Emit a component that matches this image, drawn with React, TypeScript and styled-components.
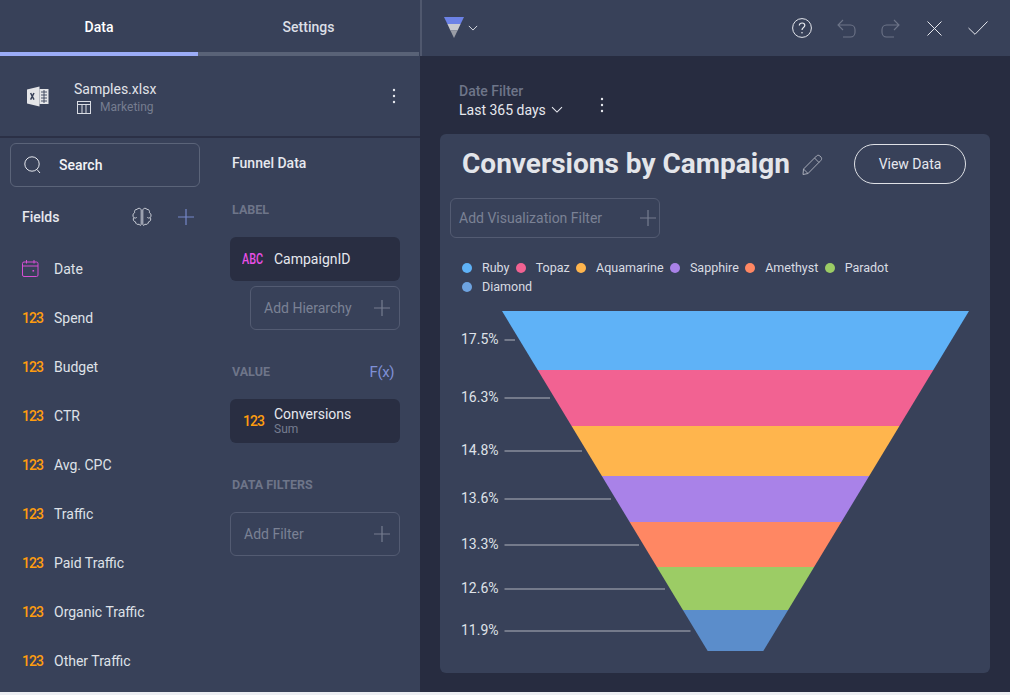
import styled, { createGlobalStyle } from "styled-components";

const GlobalStyle = createGlobalStyle`
  html, body {
    margin: 0;
    padding: 0;
    background: #eceef2;
  }
  * {
    box-sizing: border-box;
  }
`;

const fields = [
  "Spend",
  "Budget",
  "CTR",
  "Avg. CPC",
  "Traffic",
  "Paid Traffic",
  "Organic Traffic",
  "Other Traffic",
];

const legendItems = [
  { name: "Ruby", color: "#5fb2f7" },
  { name: "Topaz", color: "#f26292" },
  { name: "Aquamarine", color: "#ffb54d" },
  { name: "Sapphire", color: "#a982e8" },
  { name: "Amethyst", color: "#ff8763" },
  { name: "Paradot", color: "#9ccc65" },
  { name: "Diamond", color: "#6ea3e0" },
];

// funnel bands, coordinates relative to the chart svg
const funnelBands = [
  { top: 6, bottom: 65, color: "#5fb2f7", label: "17.5%", y: 35, lineEnd: 75 },
  { top: 65, bottom: 121, color: "#f26292", label: "16.3%", y: 93, lineEnd: 110 },
  { top: 121, bottom: 171, color: "#ffb54d", label: "14.8%", y: 146, lineEnd: 142 },
  { top: 171, bottom: 217, color: "#a982e8", label: "13.6%", y: 194, lineEnd: 171 },
  { top: 217, bottom: 262, color: "#ff8763", label: "13.3%", y: 240, lineEnd: 199 },
  { top: 262, bottom: 305, color: "#9ccc65", label: "12.6%", y: 284, lineEnd: 225 },
  { top: 305, bottom: 346, color: "#5b8dcb", label: "11.9%", y: 326, lineEnd: 250.5 },
];

const funnelEdge = (y: number) => 62 + (y - 6) * 0.605;
const bandPoints = (top: number, bottom: number) =>
  `${funnelEdge(top)},${top} ${591 - funnelEdge(top)},${top} ${591 - funnelEdge(bottom)},${bottom} ${funnelEdge(bottom)},${bottom}`;

function PlusIcon({ color = "#767d90" }: { color?: string }) {
  return (
    <svg width="18" height="18" viewBox="0 0 18 18" fill="none">
      <path d="M9 1v16M1 9h16" stroke={color} strokeWidth="1.2" />
    </svg>
  );
}

function Kebab() {
  return (
    <svg width="4" height="16" viewBox="0 0 4 16" fill="#e6e8ee">
      <circle cx="2" cy="2" r="1.2" />
      <circle cx="2" cy="8" r="1.2" />
      <circle cx="2" cy="14" r="1.2" />
    </svg>
  );
}

function Chevron({ width = 12 }: { width?: number }) {
  return (
    <svg width={width} height={width * 0.6} viewBox="0 0 12 7" fill="none">
      <path d="M1 1l5 5 5-5" stroke="#e6e8ee" strokeWidth="1.1" />
    </svg>
  );
}

function ExcelIcon() {
  return (
    <svg width="22" height="21" viewBox="0 0 22 21">
      <path d="M0 3.5L12.5 0.5V20.5L0 17.5Z" fill="#e4e5e8" />
      <rect x="12.5" y="3" width="9" height="15" fill="#e4e5e8" />
      <path d="M14 6h6M14 9h6M14 12h6M14 15h6M17 4v13" stroke="#384159" strokeWidth="0.9" />
      <path d="M3.6 7l3.4 6.6M7 7l-3.4 6.6" stroke="#384159" strokeWidth="1.5" />
    </svg>
  );
}

function TableIcon() {
  return (
    <svg width="14" height="13" viewBox="0 0 14 13" fill="none" stroke="#d9dce3" strokeWidth="1">
      <rect x="0.5" y="0.5" width="13" height="12" />
      <path d="M0.5 3.5h13M5 3.5v9M9 3.5v9" />
    </svg>
  );
}

function SearchIcon() {
  return (
    <svg width="17" height="18" viewBox="0 0 17 18" fill="none" stroke="#e6e8ee" strokeWidth="1">
      <circle cx="8" cy="8" r="7.2" />
      <path d="M13 13.5l3 3.5" />
    </svg>
  );
}

function BrainIcon() {
  return (
    <svg width="20" height="20" viewBox="0 0 20 20" fill="none" stroke="#d7dae2" strokeWidth="0.9">
      <path d="M9.2 2.8C8.6 1 6 .7 5 2.4 3.2 2.2 2 3.9 2.7 5.6 .8 6.4.3 9.2 1.8 10.5.6 12.2 1.5 14.6 3.5 14.9c0 1.9 2 3.1 3.6 2.3.6 1.6 2.1 1.5 2.1 0V2.8z" />
      <path d="M10.8 2.8c.6-1.8 3.2-2.1 4.2-.4 1.8-.2 3 1.5 2.3 3.2 1.9.8 2.4 3.6.9 4.9 1.2 1.7.3 4.1-1.7 4.4 0 1.9-2 3.1-3.6 2.3-.6 1.6-2.1 1.5-2.1 0V2.8z" />
      <path d="M1.8 10.5c1 .9 2.4.7 3-.3M18.2 10.5c-1 .9-2.4.7-3-.3" />
    </svg>
  );
}

function CalendarIcon() {
  return (
    <svg width="17" height="17" viewBox="0 0 17 17" fill="none" stroke="#d64fd4" strokeWidth="1">
      <rect x="0.5" y="2" width="15.5" height="14.5" rx="1.5" />
      <path d="M0.5 6h15.5M4.5 0v3.5M12 0v3.5" />
      <rect x="10.5" y="10" width="1.6" height="1.6" fill="#d64fd4" stroke="none" />
    </svg>
  );
}

function FunnelLogo() {
  return (
    <svg width="20" height="22" viewBox="0 0 20 22">
      <path d="M0 0H20L16.6 7H3.4Z" fill="#6c82e6" />
      <path d="M3.4 7H16.6L13.6 13.5H6.4Z" fill="#c8cad0" />
      <path d="M6.4 13.5H13.6L10 21Z" fill="#9a9da6" />
    </svg>
  );
}

function HelpIcon() {
  return (
    <svg width="20" height="20" viewBox="0 0 20 20" fill="none" stroke="#e6e8ee" strokeWidth="1">
      <circle cx="10" cy="10" r="9.4" />
      <path d="M7.3 7.6c0-1.6 1.2-2.6 2.8-2.6 1.6 0 2.7 1 2.7 2.4 0 2.2-2.8 2.2-2.8 4.6" strokeWidth="1.2" />
      <circle cx="10" cy="14.8" r="0.8" fill="#e6e8ee" stroke="none" />
    </svg>
  );
}

function UndoIcon({ flip }: { flip?: boolean }) {
  return (
    <svg
      width="19"
      height="19"
      viewBox="0 0 19 19"
      fill="none"
      stroke="#6d7488"
      strokeWidth="1.1"
      style={flip ? { transform: "scaleX(-1)" } : undefined}
    >
      <path d="M6 1L1 6l5 5M1 6h12.5c2.5 0 4.5 2 4.5 4.8v2.4c0 2.8-2 4.8-4.5 4.8H6" />
    </svg>
  );
}

function CloseIcon() {
  return (
    <svg width="15" height="15" viewBox="0 0 15 15" fill="none" stroke="#e6e8ee" strokeWidth="1">
      <path d="M.5.5l14 14M14.5.5l-14 14" />
    </svg>
  );
}

function CheckIcon() {
  return (
    <svg width="20" height="14" viewBox="0 0 20 14" fill="none" stroke="#e6e8ee" strokeWidth="1">
      <path d="M.5 7l6.5 6.3L19.5.5" />
    </svg>
  );
}

function PencilIcon() {
  return (
    <svg width="21" height="21" viewBox="0 0 21 21" fill="none" stroke="#a8acb8" strokeWidth="1">
      <path d="M1.5 15L14.5 2c1-1 2.4-1 3.4 0l1 1c1 1 1 2.4 0 3.4L6 19.5 1 20.5 1.5 15zM12.5 4l4.5 4.5M1.5 15L6 19.5" />
    </svg>
  );
}

export default function App() {
  return (
    <Page>
      <GlobalStyle />
      <Sidebar>
        <Tabs>
          <Tab $active>Data</Tab>
          <Tab>Settings</Tab>
        </Tabs>

        <SourceRow>
          <SourceIcon>
            <ExcelIcon />
          </SourceIcon>
          <SourceInfo>
            <SourceName>Samples.xlsx</SourceName>
            <SourceTable>
              <TableIcon />
              Marketing
            </SourceTable>
          </SourceInfo>
          <Kebab />
        </SourceRow>

        <SidebarBody>
          <FieldsColumn>
            <SearchBox>
              <SearchIcon />
              Search
            </SearchBox>
            <FieldsHeader>
              <FieldsTitle>Fields</FieldsTitle>
              <BrainIcon />
              <PlusIcon color="#7587c9" />
            </FieldsHeader>
            <FieldRow>
              <FieldType>
                <CalendarIcon />
              </FieldType>
              Date
            </FieldRow>
            {fields.map((field) => (
              <FieldRow key={field}>
                <FieldType>123</FieldType>
                {field}
              </FieldRow>
            ))}
          </FieldsColumn>

          <DataColumn>
            <DataTitle>Funnel Data</DataTitle>
            <SectionLabel $top={28}>LABEL</SectionLabel>
            <Chip>
              <ChipType $color="#e84fe6" $condensed>
                ABC
              </ChipType>
              <ChipName>CampaignID</ChipName>
            </Chip>
            <AddBox $indent $top={5}>
              Add Hierarchy
              <PlusIcon />
            </AddBox>
            <SectionLabel $top={33}>
              VALUE
              <FxLabel>F(x)</FxLabel>
            </SectionLabel>
            <Chip>
              <ChipType $color="#ff9d0f">123</ChipType>
              <div>
                <ChipName>Conversions</ChipName>
                <ChipSub>Sum</ChipSub>
              </div>
            </Chip>
            <SectionLabel $top={33}>DATA FILTERS</SectionLabel>
            <AddBox $top={18}>
              Add Filter
              <PlusIcon />
            </AddBox>
          </DataColumn>
        </SidebarBody>
      </Sidebar>

      <Main>
        <Toolbar>
          <ChartPicker>
            <FunnelLogo />
            <Chevron width={10} />
          </ChartPicker>
          <ToolbarActions>
            <ToolSlot>
              <HelpIcon />
            </ToolSlot>
            <ToolSlot>
              <UndoIcon />
            </ToolSlot>
            <ToolSlot>
              <UndoIcon flip />
            </ToolSlot>
            <ToolSlot>
              <CloseIcon />
            </ToolSlot>
            <ToolSlot>
              <CheckIcon />
            </ToolSlot>
          </ToolbarActions>
        </Toolbar>

        <FilterBar>
          <div>
            <FilterLabel>Date Filter</FilterLabel>
            <FilterValue>
              Last 365 days
              <Chevron />
            </FilterValue>
          </div>
          <FilterMenu>
            <Kebab />
          </FilterMenu>
        </FilterBar>

        <Card>
          <CardHeader>
            <CardTitle>Conversions by Campaign</CardTitle>
            <PencilIcon />
            <ViewDataButton>View Data</ViewDataButton>
          </CardHeader>
          <VizFilter>
            Add Visualization Filter
            <PlusIcon />
          </VizFilter>
          <Legend>
            {legendItems.map((item) => (
              <LegendItem key={item.name}>
                <LegendDot $color={item.color} />
                {item.name}
              </LegendItem>
            ))}
          </Legend>
          <ChartSvg width="550" height="350" viewBox="0 0 550 350">
            {funnelBands.map((band) => (
              <polygon
                key={band.label}
                points={bandPoints(band.top, band.bottom)}
                fill={band.color}
              />
            ))}
            {funnelBands.map((band) => (
              <g key={band.label + "-label"}>
                <line
                  x1="64.5"
                  x2={band.lineEnd}
                  y1={band.y}
                  y2={band.y}
                  stroke="#b0b4be"
                  strokeWidth="1"
                />
                <ChartLabel x="21" y={band.y + 3.8}>
                  {band.label}
                </ChartLabel>
              </g>
            ))}
          </ChartSvg>
        </Card>
      </Main>
    </Page>
  );
}

const Page = styled.div`
  display: flex;
  width: 1010px;
  height: 692px;
  overflow: hidden;
  font-family: Roboto, "Liberation Sans", sans-serif;
  font-size: 14px;
  color: #e6e8ee;
`;

const Sidebar = styled.aside`
  width: 420px;
  flex: none;
  display: flex;
  flex-direction: column;
  background: #384159;
`;

const Tabs = styled.div`
  display: grid;
  grid-template-columns: 198px 221px;
  height: 56px;
  flex: none;
`;

const Tab = styled.div<{ $active?: boolean }>`
  display: flex;
  align-items: center;
  justify-content: center;
  padding-top: 2px;
  font-weight: 500;
  font-size: 14px;
  color: ${(props) => (props.$active ? "#ffffff" : "#dcdfe6")};
  border-bottom: 4px solid ${(props) => (props.$active ? "#9bacf7" : "#596277")};
`;

const SourceRow = styled.div`
  display: flex;
  align-items: center;
  height: 82px;
  flex: none;
  padding: 0 24px 0 27px;
  border-bottom: 2px solid #2b3046;
`;

const SourceIcon = styled.div`
  display: flex;
  width: 47px;
`;

const SourceInfo = styled.div`
  flex: 1;
  margin-top: 4px;
`;

const SourceName = styled.div`
  font-size: 14px;
  line-height: 18px;
  color: #e2e4ea;
`;

const SourceTable = styled.div`
  display: flex;
  align-items: center;
  gap: 9px;
  padding-left: 3px;
  font-size: 12px;
  line-height: 18px;
  color: #767d90;
`;

const SidebarBody = styled.div`
  display: flex;
  flex: 1;
  min-height: 0;
`;

const FieldsColumn = styled.div`
  width: 210px;
  flex: none;
  padding: 5px 5px 0 10px;
`;

const SearchBox = styled.div`
  display: flex;
  align-items: center;
  gap: 18px;
  width: 190px;
  height: 44px;
  padding-left: 13px;
  border: 1px solid #5b6479;
  border-radius: 6px;
  font-weight: 500;
  color: #f2f3f6;
`;

const FieldsHeader = styled.div`
  display: flex;
  align-items: center;
  width: 185px;
  height: 30px;
  margin: 15px 0 12px;
  padding-left: 12px;
  gap: 25px;
`;

const FieldsTitle = styled.div`
  flex: 1;
  font-weight: 500;
  color: #e6e8ee;
`;

const FieldRow = styled.div`
  display: flex;
  align-items: center;
  height: 49px;
  padding-left: 12px;
  color: #dfe1e8;
`;

const FieldType = styled.div`
  width: 32px;
  flex: none;
  display: flex;
  font-weight: 500;
  font-size: 14px;
  letter-spacing: -0.9px;
  color: #ff9d0f;
`;

const DataColumn = styled.div`
  width: 170px;
  margin-left: 20px;
  padding-top: 15px;
`;

const DataTitle = styled.div`
  height: 20px;
  padding-left: 2px;
  line-height: 20px;
  font-weight: 500;
  color: #e6e8ee;
`;

const SectionLabel = styled.div<{ $top: number }>`
  display: flex;
  align-items: center;
  justify-content: space-between;
  height: 18px;
  margin-top: ${(props) => props.$top}px;
  margin-bottom: 18px;
  padding: 0 6px 1px 2px;
  font-size: 12.5px;
  font-weight: 700;
  color: #6e7589;
`;

const FxLabel = styled.span`
  font-size: 15px;
  font-weight: 400;
  letter-spacing: -0.4px;
  color: #7f90d6;
`;

const Chip = styled.div`
  display: flex;
  align-items: center;
  gap: 12px;
  height: 44px;
  padding-left: 13px;
  border-radius: 6px;
  background: #292e42;
`;

const ChipType = styled.div<{ $color: string; $condensed?: boolean }>`
  width: 19px;
  font-weight: 500;
  font-size: 14px;
  letter-spacing: -0.9px;
  white-space: nowrap;
  color: ${(props) => props.$color};
  ${(props) =>
    props.$condensed &&
    `
    margin-left: -1px;
    width: 20px;
    font-size: 15px;
    letter-spacing: 0;
    transform: scaleX(0.72);
    transform-origin: left center;
  `}
`;

const ChipName = styled.div`
  line-height: 15px;
  color: #e6e8ee;
`;

const ChipSub = styled.div`
  font-size: 12px;
  line-height: 14px;
  color: #767d90;
`;

const AddBox = styled.div<{ $indent?: boolean; $top: number }>`
  display: flex;
  align-items: center;
  justify-content: space-between;
  height: 44px;
  margin-top: ${(props) => props.$top}px;
  margin-left: ${(props) => (props.$indent ? "20px" : "0")};
  padding: 0 8px 0 13px;
  border: 1px solid #535b72;
  border-radius: 6px;
  color: #7b8295;
`;

const Main = styled.main`
  flex: 1;
  min-width: 0;
  display: flex;
  flex-direction: column;
  background: #272c40;
`;

const Toolbar = styled.div`
  display: flex;
  align-items: center;
  justify-content: space-between;
  height: 56px;
  flex: none;
  padding: 0 22px 0 22px;
  background: #384159;
  border-left: 2px solid #50586e;
`;

const ChartPicker = styled.div`
  display: flex;
  align-items: center;
  gap: 4px;
`;

const ToolbarActions = styled.div`
  display: flex;
  align-items: center;
  gap: 24px;
`;

const ToolSlot = styled.div`
  display: flex;
  align-items: center;
  justify-content: center;
  width: 20px;
  height: 20px;
`;

const FilterBar = styled.div`
  display: flex;
  align-items: center;
  height: 78px;
  flex: none;
  padding: 11px 0 0 39px;
`;

const FilterLabel = styled.div`
  font-size: 14px;
  line-height: 18px;
  font-weight: 500;
  color: #6e7589;
`;

const FilterValue = styled.div`
  display: flex;
  align-items: center;
  gap: 5px;
  line-height: 20px;
  color: #e6e8ee;
`;

const FilterMenu = styled.div`
  display: flex;
  margin: 9px 0 0 37px;
`;

const Card = styled.section`
  width: 550px;
  height: 539px;
  margin-left: 20px;
  border-radius: 6px;
  background: #384159;
`;

const CardHeader = styled.div`
  display: flex;
  align-items: center;
  padding: 10px 24px 0 22px;
`;

const CardTitle = styled.h1`
  margin: 0 12px 0 0;
  font-size: 28px;
  line-height: 40px;
  font-weight: 700;
  color: #e3e5ea;
`;

const ViewDataButton = styled.button`
  width: 112px;
  height: 40px;
  margin-left: auto;
  border: 1px solid #dfe1e6;
  border-radius: 20px;
  background: transparent;
  font-family: inherit;
  font-size: 14px;
  color: #e6e8ee;
`;

const VizFilter = styled.div`
  display: flex;
  align-items: center;
  justify-content: space-between;
  width: 210px;
  height: 40px;
  margin: 14px 0 0 10px;
  padding: 0 2px 0 8px;
  border: 1px solid #535b72;
  border-radius: 6px;
  color: #7b8295;
`;

const Legend = styled.div`
  display: flex;
  flex-wrap: wrap;
  column-gap: 6.3px;
  width: 430px;
  margin: 20px 0 0 22px;
`;

const LegendItem = styled.div`
  display: flex;
  align-items: center;
  gap: 10px;
  height: 19px;
  font-size: 12.5px;
  color: #d9dce3;
`;

const LegendDot = styled.span<{ $color: string }>`
  width: 10px;
  height: 10px;
  border-radius: 50%;
  background: ${(props) => props.$color};
`;

const ChartSvg = styled.svg`
  display: block;
  margin-top: 9px;
`;

const ChartLabel = styled.text`
  font-family: Roboto, "Liberation Sans", sans-serif;
  font-size: 14px;
  fill: #dfe1e8;
`;
